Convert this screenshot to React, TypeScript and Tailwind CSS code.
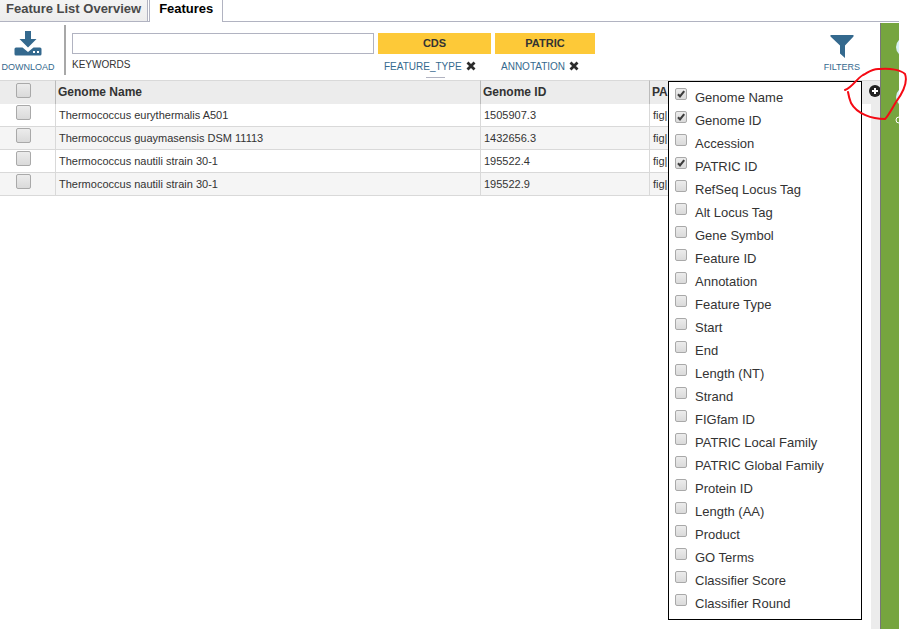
import React from "react";

const columns = [
  "Genome Name", "Genome ID", "Accession", "PATRIC ID", "RefSeq Locus Tag", "Alt Locus Tag",
  "Gene Symbol", "Feature ID", "Annotation", "Feature Type", "Start", "End", "Length (NT)",
  "Strand", "FIGfam ID", "PATRIC Local Family", "PATRIC Global Family", "Protein ID",
  "Length (AA)", "Product", "GO Terms", "Classifier Score", "Classifier Round",
];
const shown = ["Genome Name", "Genome ID", "PATRIC ID"];

const rows = [
  ["Thermococcus eurythermalis A501", "1505907.3"],
  ["Thermococcus guaymasensis DSM 11113", "1432656.3"],
  ["Thermococcus nautili strain 30-1", "195522.4"],
  ["Thermococcus nautili strain 30-1", "195522.9"],
];

const boxLook =
  "block appearance-none rounded-[2px] border border-[#a9a9a9] bg-linear-to-b from-[#ececec] to-[#dadada]";

function MenuItem({ label }: { label: string }) {
  return (
    <label className="flex h-[23px] items-start">
      <span className="relative mt-0.5 block size-3">
        <input type="checkbox" defaultChecked={shown.includes(label)} className={`peer size-3 ${boxLook}`} />
        <svg viewBox="0 0 12 12" className="pointer-events-none absolute inset-0 hidden size-3 peer-checked:block">
          <path d="M3 6.2 5 8.4 9.2 3.2" fill="none" stroke="#3c3c3c" strokeWidth="2.1" />
        </svg>
      </span>
      <span className="ml-2 pt-1 leading-4">{label}</span>
    </label>
  );
}

function Facet({ value, name, width }: { value: string; name: string; width: string }) {
  return (
    <div className={width}>
      <button className="block h-[21px] w-full bg-[#fdc938] text-[11px] font-bold text-[#333]">{value}</button>
      <div className="mt-1 flex h-4 items-center gap-1 pl-1.5 text-[10px] text-[#34698e]">
        <button>{name}</button>
        <button aria-label={`Remove ${name}`}>
          <svg viewBox="0 0 10 10" className="block size-[10px]">
            <path d="M1.5 1.5 8.5 8.5M8.5 1.5 1.5 8.5" stroke="#2b2b2b" strokeWidth="2.8" />
          </svg>
        </button>
      </div>
    </div>
  );
}

export default function App() {
  return (
    <div className="relative flex min-h-screen flex-col overflow-hidden bg-white pr-2 font-['Liberation_Sans',Arial,sans-serif] text-[#333]">
      <nav className="flex h-[22px] border-b border-[#b1b3c1] text-[13px] font-bold">
        <button className="flex h-[21px] items-start border-r border-[#b1b3c1] bg-linear-to-b from-[#f4f4f4] to-[#ededed] pr-1.5 pl-1.5 leading-[17px] text-[#494949]">
          Feature List Overview
        </button>
        <button className="ml-px flex h-[22px] items-start border-x border-[#b1b3c1] bg-white px-[9px] leading-[17px] text-black">
          Features
        </button>
      </nav>

      <div className="flex grow">
        <main className="flex min-w-0 grow flex-col">
          <div className="flex h-[58px] items-start">
            <button className="flex w-14 flex-col items-center pt-2 text-[9px] text-[#34698e]">
              <svg viewBox="0 0 28 26" className="h-[26px] w-7">
                <path fill="#34698e" d="M11 1h6v8h5.500L14 17.500 5.500 9H11z" />
                <path fill="#34698e" d="M2 17.500h6.500L14 22l5.500-4.500H26a1.500 1.500 0 0 1 1.500 1.500v5a1.500 1.500 0 0 1-1.500 1.500H2A1.500 1.500 0 0 1 .5 24v-5A1.500 1.500 0 0 1 2 17.500z" />
                <path fill="#fff" d="M19 21h2v2h-2zM23 21h2v2h-2z" />
              </svg>
              <span className="mt-1 leading-[14px]">DOWNLOAD</span>
            </button>
            <div className="mt-[3px] ml-2 h-[50px] w-0.5 bg-[#a8a8a8]" />
            <div className="mt-[11px] ml-1.5 w-[302px]">
              <input id="keywords" className="block h-[21px] w-full border border-[#b1b3c1] px-1 text-[11px] outline-none" />
              <label htmlFor="keywords" className="mt-1 block text-[10px] leading-[14px]">KEYWORDS</label>
            </div>
            <div className="mt-[11px] ml-1 flex gap-1">
              <div>
                <Facet value="CDS" name="FEATURE_TYPE" width="w-[113px]" />
                <div className="mt-[3px] ml-12 h-px w-[19px] bg-[#b1b3c1]" />
              </div>
              <Facet value="PATRIC" name="ANNOTATION" width="w-[100px]" />
            </div>
            <button className="mr-5 ml-auto flex flex-col items-center pt-3 text-[9px] text-[#34698e]">
              <svg viewBox="0 0 24 24" className="size-6">
                <path fill="#34698e" d="M.5 1h23v1.500L15 11.500V24l-5-4.500v-8L.5 2.500z" />
              </svg>
              <span className="mt-0.5 leading-[14px]">FILTERS</span>
            </button>
          </div>

          <div className="flex grow">
            <div className="min-w-0 grow">
              <table className="w-full table-fixed border-separate border-spacing-0 text-left text-[11px]">
                <colgroup>
                  <col className="w-[55px]" />
                  <col />
                  <col className="w-[169px]" />
                  <col className="w-[213px]" />
                </colgroup>
                <thead>
                  <tr className="bg-[#ececec] text-[12px] leading-[22px] [&>th]:h-6 [&>th]:border-t [&>th]:border-t-[#d9d9d9] [&>th]:p-0 [&>th]:align-top [&>th+th]:border-l [&>th+th]:border-l-[#bbb] [&>th+th]:pl-0.5">
                    <th>
                      <input type="checkbox" aria-label="Select all rows" className={`mt-0.5 ml-4 size-[15px] ${boxLook}`} />
                    </th>
                    <th>Genome Name</th>
                    <th>Genome ID</th>
                    <th>PA</th>
                  </tr>
                </thead>
                <tbody className="[&_td]:h-[23px] [&_td]:border-b [&_td]:border-[#d9d9d9] [&_td]:p-0 [&_td]:align-top [&_td]:leading-[22px] [&_td+td]:border-l [&_td+td]:pl-[3px]">
                  {rows.map(([name, id]) => (
                    <tr key={id} className="even:bg-[#f5f5f5]">
                      <td>
                        <input type="checkbox" aria-label={`Select ${id}`} className={`mt-px ml-4 size-[15px] ${boxLook}`} />
                      </td>
                      <td>{name}</td>
                      <td>{id}</td>
                      <td>fig|</td>
                    </tr>
                  ))}
                </tbody>
              </table>
            </div>

            <div className="relative flex w-[18px] shrink-0 flex-col">
              <div className="flex h-6 items-start justify-end overflow-hidden border-t border-[#d9d9d9] bg-[#ececec] pt-1">
                <button aria-label="Choose columns" className="-mr-px">
                  <svg viewBox="0 0 12 12" className="block size-3">
                    <circle cx="6" cy="6" r="6" fill="#222" />
                    <path d="M6 3v6M3 6h6" stroke="#fff" strokeWidth="2" />
                  </svg>
                </button>
              </div>
              <div className="ml-[9px] grow bg-[#ececec]" />
              <div className="absolute top-px right-[18px] w-[194px] border border-black bg-white py-1 pl-1.5 text-[13px]">
                {columns.map((c) => (
                  <MenuItem key={c} label={c} />
                ))}
              </div>
            </div>
          </div>
        </main>

        <aside className="mt-px w-[19px] shrink-0 overflow-hidden border-l border-[#777] bg-[#76a53f]">
          <svg viewBox="0 0 18 110" className="block h-[110px] w-[18px]">
            <circle cx="25" cy="24" r="10" fill="#d9f0f5" />
            <circle cx="25" cy="74" r="10" fill="#d9f0f5" />
            <circle cx="18" cy="97" r="3" fill="none" stroke="#fff" />
          </svg>
        </aside>
      </div>

      <svg viewBox="0 0 65 60" className="pointer-events-none absolute top-[66px] right-0 h-[60px] w-[65px]">
        <path
          d="M3 24C11 21 14 13 21 9C27 6 30 2 38 3C48 2 59 4 63 8C66 16 62 25 54 36C48 46 46 50 43 53C30 53 15 48 9 37Q7 32 6 26"
          fill="none" stroke="#f50a14" strokeWidth="2" strokeLinecap="round"
        />
      </svg>
    </div>
  );
}
